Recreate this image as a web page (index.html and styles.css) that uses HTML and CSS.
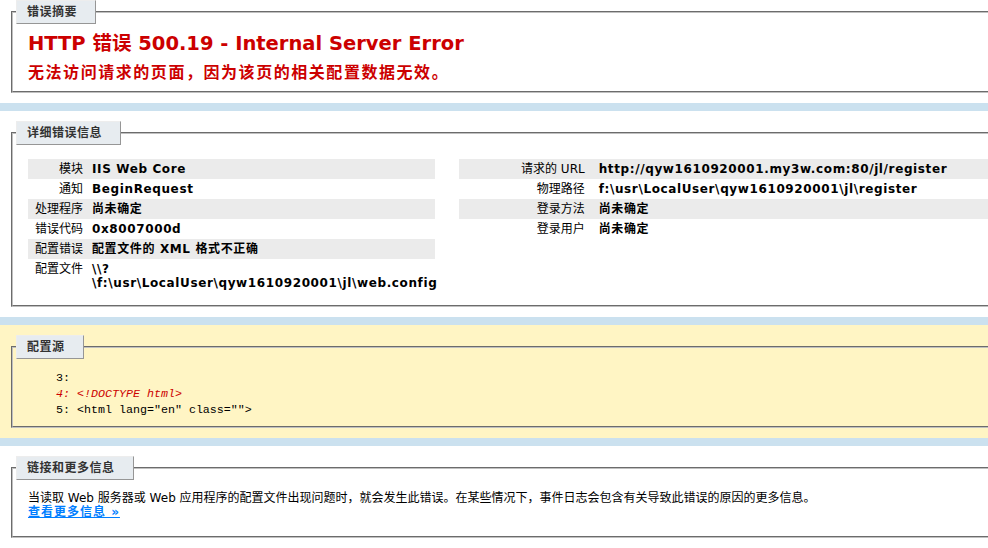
FILE: index.html
```html
<!DOCTYPE html>
<html lang="zh-CN">
<head>
<meta charset="utf-8">
<title>IIS 8.0 详细错误 - 500.19 - Internal Server Error</title>
<link rel="stylesheet" href="styles.css">
</head>
<body>
<div id="content">
  <div class="content-container first">
    <fieldset>
      <legend>错误摘要</legend>
      <h2>HTTP 错误 500.19 - Internal Server Error</h2>
      <h3>无法访问请求的页面，因为该页的相关配置数据无效。</h3>
    </fieldset>
  </div>

  <div class="content-container">
    <fieldset>
      <legend>详细错误信息</legend>
      <div class="details">
        <div class="details-left">
          <table class="info left">
            <tr class="alt"><th>模块</th><td>IIS Web Core</td></tr>
            <tr><th>通知</th><td>BeginRequest</td></tr>
            <tr class="alt"><th>处理程序</th><td>尚未确定</td></tr>
            <tr><th>错误代码</th><td>0x8007000d</td></tr>
            <tr class="alt"><th>配置错误</th><td>配置文件的 XML 格式不正确 </td></tr>
            <tr><th>配置文件</th><td>\\?<br>\f:\usr\LocalUser\qyw1610920001\jl\web.config</td></tr>
          </table>
        </div>
        <div class="details-right">
          <table class="info right">
            <tr class="alt"><th>请求的 URL</th><td>http://qyw1610920001.my3w.com:80/jl/register</td></tr>
            <tr><th>物理路径</th><td>f:\usr\LocalUser\qyw1610920001\jl\register</td></tr>
            <tr class="alt"><th>登录方法</th><td>尚未确定</td></tr>
            <tr><th>登录用户</th><td>尚未确定</td></tr>
          </table>
        </div>
      </div>
    </fieldset>
  </div>

  <div class="content-container config-source">
    <fieldset>
      <legend>配置源</legend>
      <pre><code>    3: 
</code><code class="highlight-code">    4: &lt;!DOCTYPE html&gt;
</code><code>    5: &lt;html lang="en" class=""&gt;</code></pre>
    </fieldset>
  </div>

  <div class="content-container">
    <fieldset>
      <legend>链接和更多信息</legend>
      <div class="more-text">当读取 Web 服务器或 Web 应用程序的配置文件出现问题时，就会发生此错误。在某些情况下，事件日志会包含有关导致此错误的原因的更多信息。</div>
      <p><a href="#">查看更多信息 &raquo;</a></p>
    </fieldset>
  </div>
</div>
</body>
</html>
```

FILE: styles.css
```css
html {
  overflow: hidden;
}

body {
  margin: 0;
  font-size: 12px;
  line-height: 14px;
  font-family: "DejaVu Sans", "Noto Sans CJK SC", sans-serif;
  background: #cbe1ef;
  color: #000;
}

#content {
  margin: 0;
}

.content-container {
  background: #fff;
  width: 1202px;
  margin-top: 8px;
  padding: 10px 10px 10px 9px;
}

.content-container.first {
  margin-top: 0;
  padding-top: 0;
}

.config-source {
  background: #fff5c4;
}

fieldset {
  margin: 0 2px;
  padding: 0 15px 8px 15px;
  border: 2px groove #c0c0c0;
  min-inline-size: 0;
}

.first fieldset {
  padding-bottom: 5px;
}

legend {
  color: #333;
  padding: 4px 18px 4px 10px;
  margin: 0 0 10px -12px;
  border-top: 1px solid #ededed;
  border-left: 1px solid #ededed;
  border-right: 1px solid #969696;
  border-bottom: 1px solid #969696;
  background: #e7ecf0;
  font-weight: bold;
  font-size: 12px;
  line-height: 14px;
  letter-spacing: 0.5px;
}

h2 {
  font-size: 19.5px;
  line-height: 24px;
  margin: -2px 0 0 0;
  color: #cc0000;
}

h3 {
  font-size: 16px;
  line-height: 20px;
  letter-spacing: 1.55px;
  margin: 7px 0 3px 0;
  color: #cc0000;
}

.details {
  display: flex;
}

.details-left {
  width: 35%;
  margin-right: 2%;
}

.details-right {
  width: 63%;
  overflow: hidden;
}

table.info {
  margin: 4px 0;
  width: 100%;
  border: none;
  border-collapse: collapse;
  table-layout: fixed;
}

.info td,
.info th {
  vertical-align: top;
  padding: 3px 0;
  text-align: left;
  font-weight: bold;
  border: none;
  white-space: nowrap;
}

.info td {
  letter-spacing: 0.62px;
}

.info th {
  text-align: right;
  font-weight: normal;
  box-sizing: border-box;
}

.info.left th {
  width: 64px;
  padding-right: 9px;
}

.info.right th {
  width: 140px;
  padding-right: 14px;
}

.info tr.alt td,
.info tr.alt th {
  background-color: #ebebeb;
}

pre {
  margin: 0;
  padding-top: 1px;
  font-family: "Liberation Mono", "Noto Sans CJK SC", monospace;
  font-size: 11.67px;
  line-height: 16px;
}

code {
  font-family: inherit;
  color: #000;
}

.highlight-code {
  color: #cc0000;
  font-style: italic;
}

.more-text {
  padding-top: 1px;
}

p {
  margin: 0 0 9px 0;
}

a:link,
a:visited {
  color: #007eff;
  font-weight: bold;
  letter-spacing: 1px;
}
```
